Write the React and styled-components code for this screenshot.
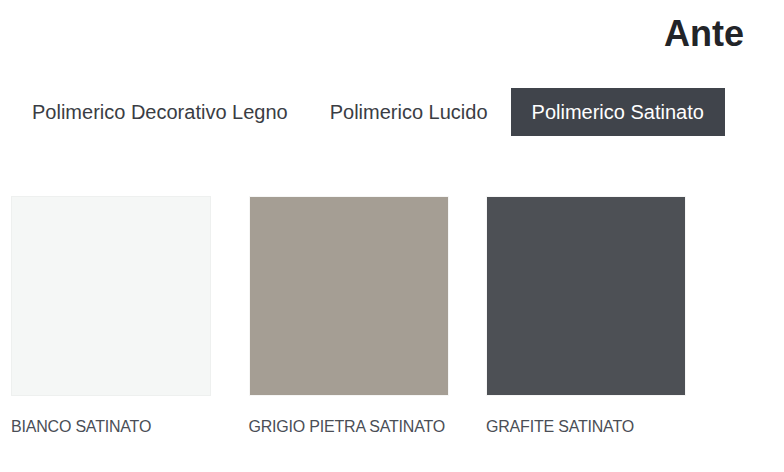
import styled, { createGlobalStyle } from "styled-components";

const Global = createGlobalStyle`
body {
  margin: 0;
  background: #ffffff;
  font-family: "Liberation Sans", Arial, sans-serif;
}
`;

const Page = styled.div`
display: flex;
flex-direction: column;
padding: 12px 40px 0 11px;
`;

const Title = styled.h2`
margin: 0;
align-self: flex-end;
font-size: 36px;
font-weight: 700;
line-height: 44px;
color: #222428;
`;

const Tabs = styled.div`
display: flex;
gap: 2px;
margin-top: 32px;
padding-left: 1px;
`;

const Tab = styled.div`
height: 48px;
display: flex;
align-items: center;
padding: 0 ${(p) => (p.active ? "21px" : "20px")};
margin-left: ${(p) => (p.active ? "1px" : "0")};
font-size: 20px;
color: ${(p) => (p.active ? "#ffffff" : "#3a3d44")};
background: ${(p) => (p.active ? "#40444b" : "transparent")};
`;

const Grid = styled.div`
display: flex;
gap: 37.5px;
margin-top: 60px;
`;

const Item = styled.div`
display: flex;
flex-direction: column;
width: 200px;
`;

const Swatch = styled.div`
width: 200px;
height: 200px;
box-sizing: border-box;
background: ${(p) => p.color};
border: 1px solid ${(p) => p.edge};
`;

const Label = styled.div`
margin-top: 22px;
font-size: 16px;
letter-spacing: -0.2px;
white-space: nowrap;
text-transform: uppercase;
color: #4a4e56;
`;

const colors = [
  { name: "Bianco Satinato", color: "#f5f7f6", edge: "#eef0ef" },
  { name: "Grigio Pietra Satinato", color: "#a59e94", edge: "#f6f6f5" },
  { name: "Grafite Satinato", color: "#4d5055", edge: "#f6f6f6" },
];

function App() {
  return (
    <Page>
      <Global />
      <Title>Ante</Title>
      <Tabs>
        <Tab>Polimerico Decorativo Legno</Tab>
        <Tab>Polimerico Lucido</Tab>
        <Tab active>Polimerico Satinato</Tab>
      </Tabs>
      <Grid>
        {colors.map((c) => (
          <Item key={c.name}>
            <Swatch color={c.color} edge={c.edge} />
            <Label>{c.name}</Label>
          </Item>
        ))}
      </Grid>
    </Page>
  );
}

export default App;
